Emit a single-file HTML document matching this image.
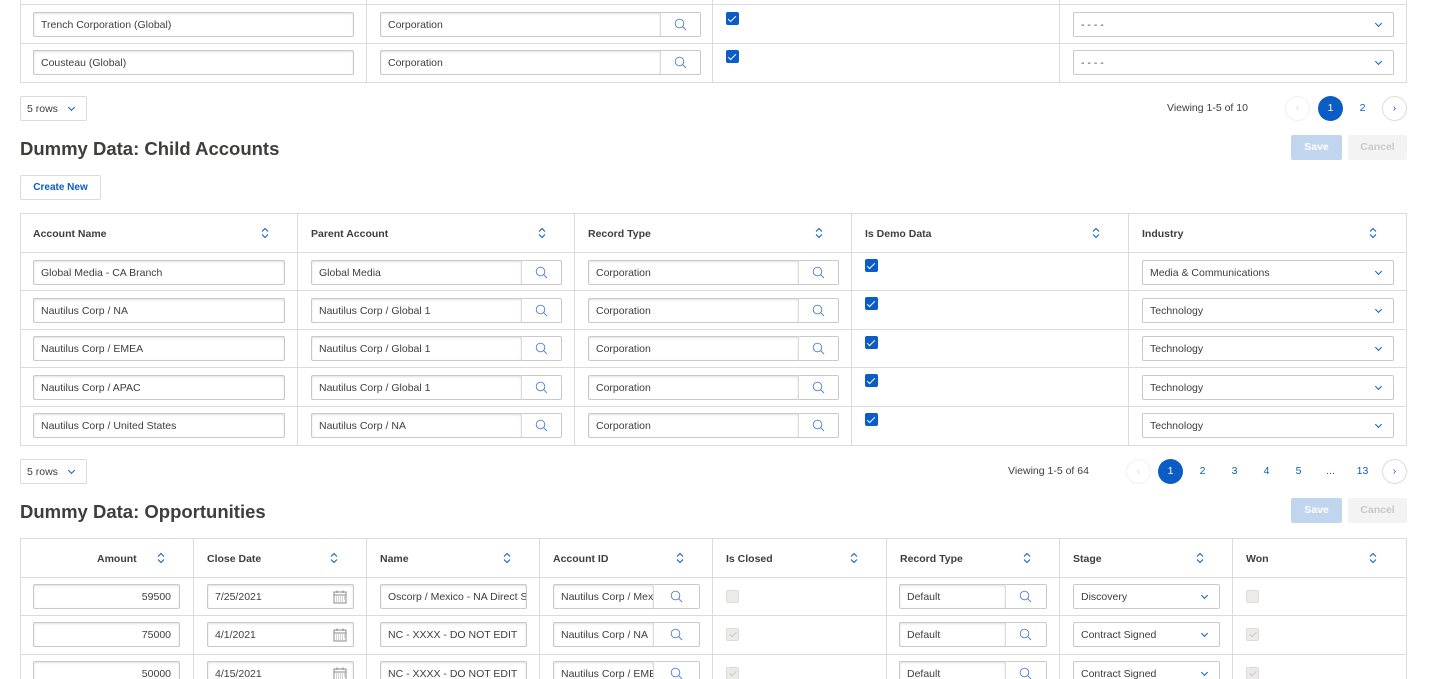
<!DOCTYPE html>
<html style="overflow:hidden;height:679px"><head><style>
*{box-sizing:border-box;margin:0;padding:0}
body{width:1430px;height:679px;overflow:hidden;background:#fff;font-family:"Liberation Sans",sans-serif;font-size:10.5px;color:#3e3e3c;position:relative}
.a{position:absolute}
.tb{position:absolute;border:1px solid #dddbda;background:#fff}
.hl{position:absolute;height:1px;background:#dddbda}
.vl{position:absolute;width:1px;background:#dddbda}
.in{position:absolute;height:25px;border:1px solid #c9c9c9;border-radius:2px;padding-left:7px;line-height:24px;background:#fff;box-shadow:inset 0 1px 2px rgba(0,0,0,.12);white-space:nowrap;overflow:hidden}
.btn{position:absolute;height:25px;border:1px solid #c9c9c9;border-left:1px solid #dddbda;border-radius:0 2px 2px 0;background:#fff;width:41px}
.btn svg{position:absolute;left:13px;top:5px}
.sel{position:absolute;height:25px;border:1px solid #c9c9c9;border-radius:2px;padding-left:7px;line-height:24px;background:#fff}
.sel:after{content:"";position:absolute;right:12px;top:8px;width:4px;height:4px;border-right:1px solid #0b5cc5;border-bottom:1px solid #0b5cc5;transform:rotate(45deg)}
.cb{position:absolute;width:13px;height:13px;background:#0b5cc5;border-radius:2px}
.cb:after{content:"";position:absolute;left:4px;top:1.5px;width:3px;height:7px;border-right:1.5px solid #fff;border-bottom:1.5px solid #fff;transform:rotate(45deg)}
.cbd{position:absolute;width:13px;height:13px;background:#ecebea;border:1px solid #dddbda;border-radius:2px}
.cbd.k:after{content:"";position:absolute;left:3.5px;top:1px;width:3px;height:6px;border-right:1px solid #c9c9c9;border-bottom:1px solid #c9c9c9;transform:rotate(45deg)}
.th{position:absolute;font-weight:bold;font-size:10.5px;color:#3e3e3c}
.so{position:absolute;width:8px;height:12px}
.h2{position:absolute;font-size:18.5px;font-weight:bold;color:#3e3e3c}
.pg{position:absolute;width:25px;height:25px;border-radius:50%;text-align:center;line-height:25px;color:#0b5cc5;font-size:10.5px}
.pg.on{background:#0b5cc5;color:#fff}
.pg.c{border:1px solid #dddbda;line-height:23px}
.pg.d{border:1px solid #f0f0f0;color:#c9d7ee;line-height:23px}
</style></head><body>
<svg width="0" height="0" style="position:absolute"><defs>
<symbol id="s" viewBox="0 0 14 14"><circle cx="5.5" cy="5.5" r="4.3" fill="none" stroke="#4a7fd0" stroke-width="0.9"/><line x1="8.6" y1="8.6" x2="12" y2="12" stroke="#4a7fd0" stroke-width="0.9"/></symbol>
<symbol id="o" viewBox="0 0 8 12"><path d="M1 4.5L4 1.5L7 4.5M1 7.5L4 10.5L7 7.5" fill="none" stroke="#0b5cc5" stroke-width="1"/></symbol>
<symbol id="cal" viewBox="0 0 14 14"><rect x="1" y="2" width="12" height="11" fill="none" stroke="#8a8a8a"/><line x1="1" y1="5" x2="13" y2="5" stroke="#8a8a8a"/><path d="M3 7h1M5 7h1M7 7h1M9 7h1M11 7h1M3 9h1M5 9h1M7 9h1M9 9h1M11 9h1M3 11h1M5 11h1M7 11h1M9 11h1" stroke="#aaa"/><line x1="4" y1="0.5" x2="4" y2="3" stroke="#8a8a8a"/><line x1="10" y1="0.5" x2="10" y2="3" stroke="#8a8a8a"/></symbol>
</defs></svg>

<!-- Table 1 -->
<div class="tb" style="left:20px;top:-20px;width:1387px;height:103px"></div>
<div class="hl" style="left:20px;top:4px;width:1387px"></div>
<div class="hl" style="left:20px;top:43px;width:1387px"></div>
<div class="vl" style="left:366px;top:0;height:82px"></div>
<div class="vl" style="left:712px;top:0;height:82px"></div>
<div class="vl" style="left:1059px;top:0;height:82px"></div>
<div class="in" style="left:33px;top:12px;width:321px">Trench Corporation (Global)</div>
<div class="in" style="left:380px;top:12px;width:281px">Corporation</div><div class="btn" style="left:660px;top:12px"><svg width="14" height="14"><use href="#s"/></svg></div>
<div class="cb" style="left:726px;top:12px"></div>
<div class="sel" style="left:1073px;top:12px;width:321px">- - - -</div>
<div class="in" style="left:33px;top:50px;width:321px">Cousteau (Global)</div>
<div class="in" style="left:380px;top:50px;width:281px">Corporation</div><div class="btn" style="left:660px;top:50px"><svg width="14" height="14"><use href="#s"/></svg></div>
<div class="cb" style="left:726px;top:50px"></div>
<div class="sel" style="left:1073px;top:50px;width:321px">- - - -</div>

<div class="sel" style="left:20px;top:96px;width:67px;border-color:#dddbda;padding-left:6px">5 rows</div>
<div class="a" style="left:1167px;top:102px">Viewing 1-5 of 10</div>
<div class="pg d" style="left:1285px;top:96px">&#8249;</div>
<div class="pg on" style="left:1318px;top:96px">1</div>
<div class="pg" style="left:1350px;top:96px">2</div>
<div class="pg c" style="left:1382px;top:96px">&#8250;</div>

<div class="h2" style="left:20px;top:138px">Dummy Data: Child Accounts</div>
<div class="a" style="left:1291px;top:135px;width:51px;height:25px;background:#c2d5ee;color:#fff;text-align:center;line-height:25px;border-radius:2px;font-weight:bold">Save</div>
<div class="a" style="left:1348px;top:135px;width:59px;height:25px;background:#f3f3f3;color:#c9c9c9;text-align:center;line-height:25px;border-radius:2px;font-weight:bold">Cancel</div>
<div class="a" style="left:20px;top:175px;width:81px;height:25px;border:1px solid #dddbda;border-radius:2px;color:#0b5cc5;text-align:center;line-height:23px;font-weight:bold;font-size:10px">Create New</div>

<!-- Table 2 -->
<div class="tb" style="left:20px;top:213px;width:1387px;height:233px"></div>
<div class="hl" style="left:20px;top:252px;width:1387px"></div>
<div class="hl" style="left:20px;top:290px;width:1387px"></div>
<div class="hl" style="left:20px;top:329px;width:1387px"></div>
<div class="hl" style="left:20px;top:367px;width:1387px"></div>
<div class="hl" style="left:20px;top:406px;width:1387px"></div>
<div class="vl" style="left:297px;top:213px;height:232px"></div>
<div class="vl" style="left:574px;top:213px;height:232px"></div>
<div class="vl" style="left:851px;top:213px;height:232px"></div>
<div class="vl" style="left:1128px;top:213px;height:232px"></div>
<div class="th" style="left:33px;top:228px">Account Name</div><svg class="so" style="left:261px;top:227px"><use href="#o"/></svg>
<div class="th" style="left:311px;top:228px">Parent Account</div><svg class="so" style="left:538px;top:227px"><use href="#o"/></svg>
<div class="th" style="left:588px;top:228px">Record Type</div><svg class="so" style="left:815px;top:227px"><use href="#o"/></svg>
<div class="th" style="left:865px;top:228px">Is Demo Data</div><svg class="so" style="left:1092px;top:227px"><use href="#o"/></svg>
<div class="th" style="left:1142px;top:228px">Industry</div><svg class="so" style="left:1369px;top:227px"><use href="#o"/></svg>

<div class="in" style="left:33px;top:260px;width:252px">Global Media - CA Branch</div>
<div class="in" style="left:311px;top:260px;width:211px">Global Media</div><div class="btn" style="left:521px;top:260px"><svg width="14" height="14"><use href="#s"/></svg></div>
<div class="in" style="left:588px;top:260px;width:211px">Corporation</div><div class="btn" style="left:798px;top:260px"><svg width="14" height="14"><use href="#s"/></svg></div>
<div class="cb" style="left:865px;top:259px"></div>
<div class="sel" style="left:1142px;top:260px;width:252px">Media &amp; Communications</div>

<div class="in" style="left:33px;top:298px;width:252px">Nautilus Corp / NA</div>
<div class="in" style="left:311px;top:298px;width:211px">Nautilus Corp / Global 1</div><div class="btn" style="left:521px;top:298px"><svg width="14" height="14"><use href="#s"/></svg></div>
<div class="in" style="left:588px;top:298px;width:211px">Corporation</div><div class="btn" style="left:798px;top:298px"><svg width="14" height="14"><use href="#s"/></svg></div>
<div class="cb" style="left:865px;top:297px"></div>
<div class="sel" style="left:1142px;top:298px;width:252px">Technology</div>

<div class="in" style="left:33px;top:336px;width:252px">Nautilus Corp / EMEA</div>
<div class="in" style="left:311px;top:336px;width:211px">Nautilus Corp / Global 1</div><div class="btn" style="left:521px;top:336px"><svg width="14" height="14"><use href="#s"/></svg></div>
<div class="in" style="left:588px;top:336px;width:211px">Corporation</div><div class="btn" style="left:798px;top:336px"><svg width="14" height="14"><use href="#s"/></svg></div>
<div class="cb" style="left:865px;top:336px"></div>
<div class="sel" style="left:1142px;top:336px;width:252px">Technology</div>

<div class="in" style="left:33px;top:375px;width:252px">Nautilus Corp / APAC</div>
<div class="in" style="left:311px;top:375px;width:211px">Nautilus Corp / Global 1</div><div class="btn" style="left:521px;top:375px"><svg width="14" height="14"><use href="#s"/></svg></div>
<div class="in" style="left:588px;top:375px;width:211px">Corporation</div><div class="btn" style="left:798px;top:375px"><svg width="14" height="14"><use href="#s"/></svg></div>
<div class="cb" style="left:865px;top:374px"></div>
<div class="sel" style="left:1142px;top:375px;width:252px">Technology</div>

<div class="in" style="left:33px;top:413px;width:252px">Nautilus Corp / United States</div>
<div class="in" style="left:311px;top:413px;width:211px">Nautilus Corp / NA</div><div class="btn" style="left:521px;top:413px"><svg width="14" height="14"><use href="#s"/></svg></div>
<div class="in" style="left:588px;top:413px;width:211px">Corporation</div><div class="btn" style="left:798px;top:413px"><svg width="14" height="14"><use href="#s"/></svg></div>
<div class="cb" style="left:865px;top:413px"></div>
<div class="sel" style="left:1142px;top:413px;width:252px">Technology</div>

<div class="sel" style="left:20px;top:459px;width:67px;border-color:#dddbda;padding-left:6px">5 rows</div>
<div class="a" style="left:1008px;top:465px">Viewing 1-5 of 64</div>
<div class="pg d" style="left:1126px;top:459px">&#8249;</div>
<div class="pg on" style="left:1158px;top:459px">1</div>
<div class="pg" style="left:1190px;top:459px">2</div>
<div class="pg" style="left:1222px;top:459px">3</div>
<div class="pg" style="left:1254px;top:459px">4</div>
<div class="pg" style="left:1286px;top:459px">5</div>
<div class="pg" style="left:1318px;top:459px">...</div>
<div class="pg" style="left:1350px;top:459px">13</div>
<div class="pg c" style="left:1382px;top:459px">&#8250;</div>

<div class="h2" style="left:20px;top:501px">Dummy Data: Opportunities</div>
<div class="a" style="left:1291px;top:498px;width:51px;height:25px;background:#c2d5ee;color:#fff;text-align:center;line-height:25px;border-radius:2px;font-weight:bold">Save</div>
<div class="a" style="left:1348px;top:498px;width:59px;height:25px;background:#f3f3f3;color:#c9c9c9;text-align:center;line-height:25px;border-radius:2px;font-weight:bold">Cancel</div>

<!-- Table 3 -->
<div class="tb" style="left:20px;top:538px;width:1387px;height:141px;border-bottom:none"></div>
<div class="hl" style="left:20px;top:577px;width:1387px"></div>
<div class="hl" style="left:20px;top:615px;width:1387px"></div>
<div class="hl" style="left:20px;top:654px;width:1387px"></div>
<div class="vl" style="left:193px;top:538px;height:141px"></div>
<div class="vl" style="left:366px;top:538px;height:141px"></div>
<div class="vl" style="left:539px;top:538px;height:141px"></div>
<div class="vl" style="left:712px;top:538px;height:141px"></div>
<div class="vl" style="left:886px;top:538px;height:141px"></div>
<div class="vl" style="left:1059px;top:538px;height:141px"></div>
<div class="vl" style="left:1232px;top:538px;height:141px"></div>
<div class="th" style="left:97px;top:553px">Amount</div><svg class="so" style="left:157px;top:552px"><use href="#o"/></svg>
<div class="th" style="left:207px;top:553px">Close Date</div><svg class="so" style="left:330px;top:552px"><use href="#o"/></svg>
<div class="th" style="left:380px;top:553px">Name</div><svg class="so" style="left:503px;top:552px"><use href="#o"/></svg>
<div class="th" style="left:553px;top:553px">Account ID</div><svg class="so" style="left:676px;top:552px"><use href="#o"/></svg>
<div class="th" style="left:726px;top:553px">Is Closed</div><svg class="so" style="left:850px;top:552px"><use href="#o"/></svg>
<div class="th" style="left:900px;top:553px">Record Type</div><svg class="so" style="left:1023px;top:552px"><use href="#o"/></svg>
<div class="th" style="left:1073px;top:553px">Stage</div><svg class="so" style="left:1196px;top:552px"><use href="#o"/></svg>
<div class="th" style="left:1246px;top:553px">Won</div><svg class="so" style="left:1369px;top:552px"><use href="#o"/></svg>

<div class="in" style="left:33px;top:584px;width:147px;text-align:right;padding-right:8px">59500</div>
<div class="in" style="left:207px;top:584px;width:147px">7/25/2021<svg style="position:absolute;right:6px;top:5px" width="14" height="14"><use href="#cal"/></svg></div>
<div class="in" style="left:380px;top:584px;width:147px">Oscorp / Mexico - NA Direct S</div>
<div class="in" style="left:553px;top:584px;width:101px">Nautilus Corp / Mex</div><div class="btn" style="left:653px;top:584px;width:47px"><svg width="14" height="14" style="left:16px"><use href="#s"/></svg></div>
<div class="cbd" style="left:726px;top:590px"></div>
<div class="in" style="left:899px;top:584px;width:107px">Default</div><div class="btn" style="left:1005px;top:584px;width:42px"><svg width="14" height="14"><use href="#s"/></svg></div>
<div class="sel" style="left:1073px;top:584px;width:147px">Discovery</div>
<div class="cbd" style="left:1246px;top:590px"></div>

<div class="in" style="left:33px;top:622px;width:147px;text-align:right;padding-right:8px">75000</div>
<div class="in" style="left:207px;top:622px;width:147px">4/1/2021<svg style="position:absolute;right:6px;top:5px" width="14" height="14"><use href="#cal"/></svg></div>
<div class="in" style="left:380px;top:622px;width:147px">NC - XXXX - DO NOT EDIT</div>
<div class="in" style="left:553px;top:622px;width:101px">Nautilus Corp / NA</div><div class="btn" style="left:653px;top:622px;width:47px"><svg width="14" height="14" style="left:16px"><use href="#s"/></svg></div>
<div class="cbd k" style="left:726px;top:628px"></div>
<div class="in" style="left:899px;top:622px;width:107px">Default</div><div class="btn" style="left:1005px;top:622px;width:42px"><svg width="14" height="14"><use href="#s"/></svg></div>
<div class="sel" style="left:1073px;top:622px;width:147px">Contract Signed</div>
<div class="cbd k" style="left:1246px;top:628px"></div>

<div class="in" style="left:33px;top:661px;width:147px;text-align:right;padding-right:8px">50000</div>
<div class="in" style="left:207px;top:661px;width:147px">4/15/2021<svg style="position:absolute;right:6px;top:5px" width="14" height="14"><use href="#cal"/></svg></div>
<div class="in" style="left:380px;top:661px;width:147px">NC - XXXX - DO NOT EDIT</div>
<div class="in" style="left:553px;top:661px;width:101px">Nautilus Corp / EME</div><div class="btn" style="left:653px;top:661px;width:47px"><svg width="14" height="14" style="left:16px"><use href="#s"/></svg></div>
<div class="cbd k" style="left:726px;top:667px"></div>
<div class="in" style="left:899px;top:661px;width:107px">Default</div><div class="btn" style="left:1005px;top:661px;width:42px"><svg width="14" height="14"><use href="#s"/></svg></div>
<div class="sel" style="left:1073px;top:661px;width:147px">Contract Signed</div>
<div class="cbd k" style="left:1246px;top:667px"></div>
</body></html>
